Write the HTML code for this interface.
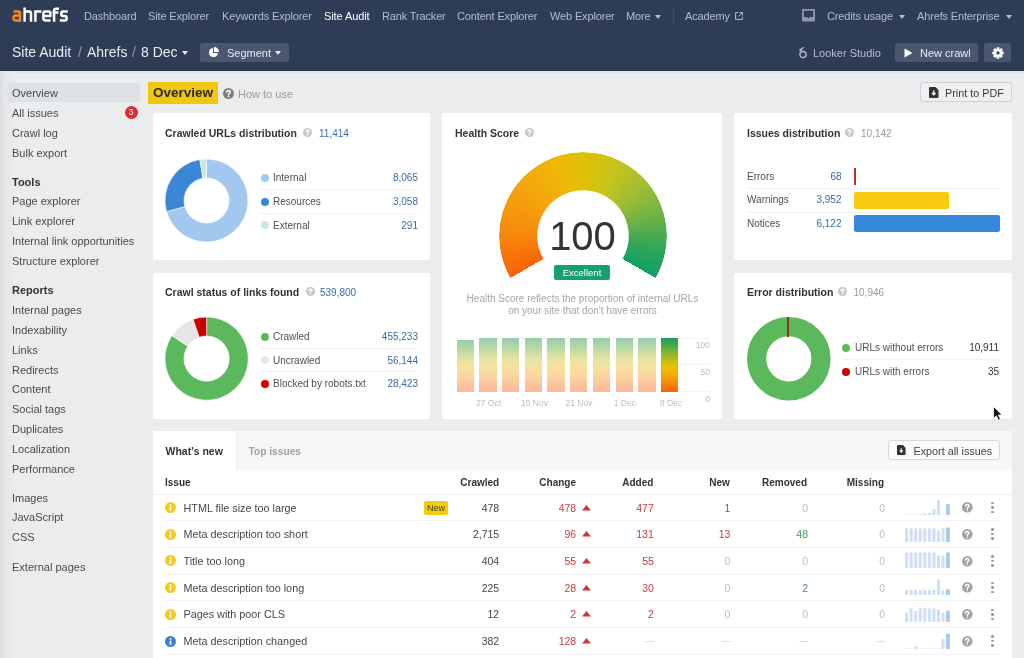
<!DOCTYPE html>
<html><head><meta charset="utf-8">
<style>
*{box-sizing:border-box;margin:0;padding:0}
html,body{width:1024px;height:658px;overflow:hidden}
#root{position:absolute;left:0;top:0;width:1024px;height:658px;will-change:transform}
body{font-family:"Liberation Sans",sans-serif;background:#eaecee;position:relative;color:#333}
.a{position:absolute;white-space:nowrap}
svg.a{overflow:visible}
</style></head><body>
<div id="root"><div class="a" style="left:0px;top:0px;width:1024px;height:71px;background:#2f3c56;"></div>
<div class="a" style="left:0px;top:69.5px;width:1024px;height:1.5px;background:#2a3447;"></div>
<div class="a" style="left:0px;top:71px;width:1024px;height:1.5px;background:#dfe3ea;"></div>
<svg class="a" style="left:12px;top:7px" width="57" height="16" viewBox="0 0 57 16"><g fill="none" stroke-width="2.5" stroke-linejoin="round">
<path d="M1.6 4.6H6.4Q8 4.6 8 6.2V14.8M8 8.6H3.4Q1.6 8.6 1.6 10.4V11.6Q1.6 13.4 3.4 13.4H8" stroke="#f5891f"/>
<path d="M12.6 0.4V14.8M12.6 4.6H17.2Q19 4.6 19 6.4V14.8" stroke="#fff"/>
<path d="M23.4 3.3V14.8M23.4 4.6H29.4" stroke="#fff"/>
<path d="M31.4 9H38.4V6.4Q38.4 4.6 36.6 4.6H33.2Q31.4 4.6 31.4 6.4V11.6Q31.4 13.4 33.2 13.4H38.6" stroke="#fff"/>
<path d="M42.1 14.8V3.6Q42.1 1.8 43.9 1.8H47M40.6 5.6H46.4" stroke="#fff"/>
<path d="M55.8 4.6H51Q49.3 4.6 49.3 6.3V7.3Q49.3 9 51 9H52.9Q54.6 9 54.6 10.7V11.7Q54.6 13.4 52.9 13.4H47.9" stroke="#fff"/>
</g></svg>
<div class="a" style="left:84px;top:11px;font-size:11px;line-height:11px;color:#b3bdd0;letter-spacing:-0.15px;">Dashboard</div>
<div class="a" style="left:148px;top:11px;font-size:11px;line-height:11px;color:#b3bdd0;letter-spacing:-0.15px;">Site Explorer</div>
<div class="a" style="left:222px;top:11px;font-size:11px;line-height:11px;color:#b3bdd0;letter-spacing:-0.15px;">Keywords Explorer</div>
<div class="a" style="left:382px;top:11px;font-size:11px;line-height:11px;color:#b3bdd0;letter-spacing:-0.15px;">Rank Tracker</div>
<div class="a" style="left:457px;top:11px;font-size:11px;line-height:11px;color:#b3bdd0;letter-spacing:-0.15px;">Content Explorer</div>
<div class="a" style="left:550px;top:11px;font-size:11px;line-height:11px;color:#b3bdd0;letter-spacing:-0.15px;">Web Explorer</div>
<div class="a" style="left:626px;top:11px;font-size:11px;line-height:11px;color:#b3bdd0;letter-spacing:-0.15px;">More</div>
<div class="a" style="left:685px;top:11px;font-size:11px;line-height:11px;color:#b3bdd0;letter-spacing:-0.15px;">Academy</div>
<div class="a" style="left:827px;top:11px;font-size:11px;line-height:11px;color:#b3bdd0;letter-spacing:-0.15px;">Credits usage</div>
<div class="a" style="left:917px;top:11px;font-size:11px;line-height:11px;color:#b3bdd0;letter-spacing:-0.15px;">Ahrefs Enterprise</div>
<div class="a" style="left:324px;top:11px;font-size:11px;line-height:11px;color:#ffffff;letter-spacing:-0.1px;">Site Audit</div>
<div class="a" style="left:655px;top:15px;width:0;height:0;border-left:3.0px solid transparent;border-right:3.0px solid transparent;border-top:4px solid #b3bdd0"></div>
<div class="a" style="left:899px;top:15px;width:0;height:0;border-left:3.0px solid transparent;border-right:3.0px solid transparent;border-top:4px solid #b3bdd0"></div>
<div class="a" style="left:1006px;top:15px;width:0;height:0;border-left:3.0px solid transparent;border-right:3.0px solid transparent;border-top:4px solid #b3bdd0"></div>
<div class="a" style="left:673px;top:8px;width:1px;height:17px;background:#404d64;"></div>
<svg class="a" style="left:735px;top:12px" width="8" height="8" viewBox="0 0 8 8"><path d="M3.2 0.6H0.6V7.4H7.4V4.8M4.6 0.6H7.4V3.4M7.4 0.6L3.6 4.4" fill="none" stroke="#b3bdd0" stroke-width="1"/></svg>
<svg class="a" style="left:802px;top:9px" width="14" height="13" viewBox="0 0 14 13"><rect x="0" y="0" width="13" height="12.5" rx="1" fill="#8d97a9"/><path d="M1.8 1.8H11.2V8H7.9L6.5 9.6L5.1 8H1.8Z" fill="#2f3c56"/></svg>
<div class="a" style="left:12px;top:45px;font-size:14px;line-height:14px;color:#e9ecf1;">Site Audit</div>
<div class="a" style="left:78px;top:45px;font-size:14px;line-height:14px;color:#8f99ab;">/</div>
<div class="a" style="left:87px;top:45px;font-size:14px;line-height:14px;color:#e9ecf1;">Ahrefs</div>
<div class="a" style="left:132px;top:45px;font-size:14px;line-height:14px;color:#8f99ab;">/</div>
<div class="a" style="left:141px;top:45px;font-size:14px;line-height:14px;color:#e9ecf1;">8 Dec</div>
<div class="a" style="left:182px;top:51px;width:0;height:0;border-left:3.0px solid transparent;border-right:3.0px solid transparent;border-top:4px solid #e9ecf1"></div>
<div class="a" style="left:200px;top:43px;width:89px;height:19px;background:#4b576d;border-radius:2.5px"></div>
<svg class="a" style="left:208.3px;top:47px" width="11" height="11" viewBox="0 0 11 11"><path d="M5 1A4.5 4.5 0 1 0 10 6H5Z" fill="#fff"/><path d="M6 0V5H11A5 5 0 0 0 6 0Z" fill="#fff"/></svg>
<div class="a" style="left:227px;top:48px;font-size:11px;line-height:11px;color:#e9ecf1;">Segment</div>
<div class="a" style="left:275px;top:51px;width:0;height:0;border-left:3.0px solid transparent;border-right:3.0px solid transparent;border-top:4px solid #e9ecf1"></div>
<svg class="a" style="left:799px;top:46px" width="9" height="13" viewBox="0 0 9 13"><circle cx="4" cy="8.6" r="3.1" fill="none" stroke="#b3bdd0" stroke-width="1.3"/><circle cx="1.6" cy="4" r="1.3" fill="#b3bdd0"/><path d="M1.6 4L4.3 1.6" stroke="#b3bdd0" stroke-width="1.3" stroke-linecap="round"/></svg>
<div class="a" style="left:813px;top:48px;font-size:11px;line-height:11px;color:#b3bdd0;">Looker Studio</div>
<div class="a" style="left:895px;top:43px;width:83px;height:19px;background:#4b576d;border-radius:2.5px"></div>
<svg class="a" style="left:904px;top:48px" width="9" height="10" viewBox="0 0 9 10"><path d="M0.5 0.5L8.5 5L0.5 9.5Z" fill="#fff"/></svg>
<div class="a" style="left:920px;top:48px;font-size:11px;line-height:11px;color:#e9ecf1;">New crawl</div>
<div class="a" style="left:984px;top:43px;width:27px;height:19px;background:#4b576d;border-radius:2.5px"></div>
<svg class="a" style="left:992.2px;top:47px" width="12" height="12" viewBox="0 0 14 14"><polygon points="13.64,5.52 13.64,8.48 11.59,8.73 11.46,9.02 12.74,10.64 10.64,12.74 9.02,11.46 8.73,11.59 8.48,13.64 5.52,13.64 5.27,11.59 4.98,11.46 3.36,12.74 1.26,10.64 2.54,9.02 2.41,8.73 0.36,8.48 0.36,5.52 2.41,5.27 2.54,4.98 1.26,3.36 3.36,1.26 4.98,2.54 5.27,2.41 5.52,0.36 8.48,0.36 8.73,2.41 9.02,2.54 10.64,1.26 12.74,3.36 11.46,4.98 11.59,5.27" fill="#fff"/><circle cx="7" cy="7" r="2.1" fill="#4a566d"/></svg>
<div class="a" style="left:0;top:72px;width:16px;height:586px;background:linear-gradient(90deg,#dbdde0,#e4e6e8 5px,#eaecee 16px)"></div>
<div class="a" style="left:7px;top:83px;width:133px;height:19px;background:#dfe2e5;border-radius:2px"></div>
<div class="a" style="left:12px;top:88px;font-size:11px;line-height:11px;color:#4a4a4a;">Overview</div>
<div class="a" style="left:12px;top:108px;font-size:11px;line-height:11px;color:#4a4a4a;">All issues</div>
<div class="a" style="left:12px;top:128px;font-size:11px;line-height:11px;color:#4a4a4a;">Crawl log</div>
<div class="a" style="left:12px;top:148px;font-size:11px;line-height:11px;color:#4a4a4a;">Bulk export</div>
<div class="a" style="left:12px;top:196px;font-size:11px;line-height:11px;color:#4a4a4a;">Page explorer</div>
<div class="a" style="left:12px;top:216px;font-size:11px;line-height:11px;color:#4a4a4a;">Link explorer</div>
<div class="a" style="left:12px;top:236px;font-size:11px;line-height:11px;color:#4a4a4a;">Internal link opportunities</div>
<div class="a" style="left:12px;top:256px;font-size:11px;line-height:11px;color:#4a4a4a;">Structure explorer</div>
<div class="a" style="left:12px;top:305px;font-size:11px;line-height:11px;color:#4a4a4a;">Internal pages</div>
<div class="a" style="left:12px;top:325px;font-size:11px;line-height:11px;color:#4a4a4a;">Indexability</div>
<div class="a" style="left:12px;top:345px;font-size:11px;line-height:11px;color:#4a4a4a;">Links</div>
<div class="a" style="left:12px;top:365px;font-size:11px;line-height:11px;color:#4a4a4a;">Redirects</div>
<div class="a" style="left:12px;top:384px;font-size:11px;line-height:11px;color:#4a4a4a;">Content</div>
<div class="a" style="left:12px;top:404px;font-size:11px;line-height:11px;color:#4a4a4a;">Social tags</div>
<div class="a" style="left:12px;top:424px;font-size:11px;line-height:11px;color:#4a4a4a;">Duplicates</div>
<div class="a" style="left:12px;top:444px;font-size:11px;line-height:11px;color:#4a4a4a;">Localization</div>
<div class="a" style="left:12px;top:464px;font-size:11px;line-height:11px;color:#4a4a4a;">Performance</div>
<div class="a" style="left:12px;top:493px;font-size:11px;line-height:11px;color:#4a4a4a;">Images</div>
<div class="a" style="left:12px;top:512px;font-size:11px;line-height:11px;color:#4a4a4a;">JavaScript</div>
<div class="a" style="left:12px;top:532px;font-size:11px;line-height:11px;color:#4a4a4a;">CSS</div>
<div class="a" style="left:12px;top:562px;font-size:11px;line-height:11px;color:#4a4a4a;">External pages</div>
<div class="a" style="left:12px;top:177px;font-size:11px;line-height:11px;font-weight:bold;color:#333;">Tools</div>
<div class="a" style="left:12px;top:285px;font-size:11px;line-height:11px;font-weight:bold;color:#333;">Reports</div>
<div class="a" style="left:124.5px;top:106px;width:13px;height:13px;border-radius:50%;background:#e02a2b;color:#fff;font-size:9px;line-height:13px;text-align:center">3</div>
<div class="a" style="left:148px;top:82px;width:70px;height:22px;background:#f0c70e;"></div>
<div class="a" style="left:153px;top:86px;font-size:13.5px;line-height:13.5px;font-weight:bold;color:#2b2a1c;">Overview</div>
<svg class="a" style="left:222.5px;top:88px" width="11" height="11" viewBox="0 0 10 10"><circle cx="5" cy="5" r="5" fill="#7f7f7f"/><path d="M3.4 3.9Q3.4 2.3 5 2.3Q6.6 2.3 6.6 3.7Q6.6 4.6 5.6 5.1Q5 5.4 5 6.2" fill="none" stroke="#fff" stroke-width="1.3" stroke-linecap="round"/><circle cx="5" cy="7.8" r="0.75" fill="#fff"/></svg>
<div class="a" style="left:238px;top:89px;font-size:11px;line-height:11px;color:#9a9a9a;">How to use</div>
<div class="a" style="left:920px;top:82px;width:92px;height:20px;background:#eef0f2;border:1px solid #cdd0d4;border-radius:3px"></div>
<svg class="a" style="left:929px;top:87px" width="10" height="11" viewBox="0 0 10 11"><path d="M0 1Q0 0 1 0H6.5L9.5 3V10Q9.5 11 8.5 11H1Q0 11 0 10Z" fill="#333"/><path d="M4.75 3.5V7.5M3 6L4.75 7.8L6.5 6" fill="none" stroke="#fff" stroke-width="1.3"/></svg>
<div class="a" style="left:945px;top:88px;font-size:10.8px;line-height:10.8px;color:#383838;">Print to PDF</div>
<div class="a" style="left:153px;top:113px;width:277px;height:147px;background:#fff;border-radius:2px"></div>
<div class="a" style="left:153px;top:273px;width:277px;height:146px;background:#fff;border-radius:2px"></div>
<div class="a" style="left:442px;top:113px;width:280px;height:306px;background:#fff;border-radius:2px"></div>
<div class="a" style="left:734px;top:113px;width:278px;height:147px;background:#fff;border-radius:2px"></div>
<div class="a" style="left:734px;top:273px;width:278px;height:146px;background:#fff;border-radius:2px"></div>
<div class="a" style="left:153px;top:431px;width:859px;height:227px;background:#fff;"></div>
<div class="a" style="left:165px;top:128px;font-size:10.5px;line-height:10.5px;font-weight:bold;color:#333;">Crawled URLs distribution</div>
<svg class="a" style="left:303px;top:128.2px" width="9" height="9" viewBox="0 0 10 10"><circle cx="5" cy="5" r="5" fill="#c8c8c8"/><path d="M3.4 3.9Q3.4 2.3 5 2.3Q6.6 2.3 6.6 3.7Q6.6 4.6 5.6 5.1Q5 5.4 5 6.2" fill="none" stroke="#fff" stroke-width="1.3" stroke-linecap="round"/><circle cx="5" cy="7.8" r="0.75" fill="#fff"/></svg>
<div class="a" style="left:319px;top:129px;font-size:10px;line-height:10px;color:#3b6aa6;">11,414</div>
<svg class="a" style="left:164.2px;top:157.6px" width="85.0" height="85.0" viewBox="-42.5 -42.5 85.0 85.0"><path d="M0.000 -41.500A41.5 41.5 0 1 1 -39.966 11.180L-21.668 6.061A22.5 22.5 0 1 0 0.000 -22.500Z" fill="#a3c8ef" stroke="#fff" stroke-width="0.6"/><path d="M-39.966 11.180A41.5 41.5 0 0 1 -6.619 -40.969L-3.589 -22.212A22.5 22.5 0 0 0 -21.668 6.061Z" fill="#3b87d6" stroke="#fff" stroke-width="0.6"/><path d="M-6.619 -40.969A41.5 41.5 0 0 1 -0.000 -41.500L-0.000 -22.500A22.5 22.5 0 0 0 -3.589 -22.212Z" fill="#c6e9d9" stroke="#fff" stroke-width="0.6"/></svg>
<div class="a" style="left:260.5px;top:173.8px;width:8px;height:8px;border-radius:50%;background:#a3c8ef"></div>
<div class="a" style="left:273px;top:173px;font-size:10px;line-height:10px;color:#505050;">Internal</div>
<div class="a" style="right:606px;text-align:right;top:173px;font-size:10px;line-height:10px;color:#3b6aa6;">8,065</div>
<div class="a" style="left:260.5px;top:197.5px;width:8px;height:8px;border-radius:50%;background:#3b87d6"></div>
<div class="a" style="left:273px;top:197px;font-size:10px;line-height:10px;color:#505050;">Resources</div>
<div class="a" style="right:606px;text-align:right;top:197px;font-size:10px;line-height:10px;color:#3b6aa6;">3,058</div>
<div class="a" style="left:260.5px;top:221.2px;width:8px;height:8px;border-radius:50%;background:#c6e9d9"></div>
<div class="a" style="left:273px;top:221px;font-size:10px;line-height:10px;color:#505050;">External</div>
<div class="a" style="right:606px;text-align:right;top:221px;font-size:10px;line-height:10px;color:#3b6aa6;">291</div>
<div class="a" style="left:260px;top:189px;width:157px;height:1px;background:#f0f0f0;"></div>
<div class="a" style="left:260px;top:212.5px;width:157px;height:1px;background:#f0f0f0;"></div>
<div class="a" style="left:165px;top:287px;font-size:10.5px;line-height:10.5px;font-weight:bold;color:#333;">Crawl status of links found</div>
<svg class="a" style="left:305.5px;top:287.2px" width="9" height="9" viewBox="0 0 10 10"><circle cx="5" cy="5" r="5" fill="#c8c8c8"/><path d="M3.4 3.9Q3.4 2.3 5 2.3Q6.6 2.3 6.6 3.7Q6.6 4.6 5.6 5.1Q5 5.4 5 6.2" fill="none" stroke="#fff" stroke-width="1.3" stroke-linecap="round"/><circle cx="5" cy="7.8" r="0.75" fill="#fff"/></svg>
<div class="a" style="left:320px;top:288px;font-size:10px;line-height:10px;color:#3b6aa6;">539,800</div>
<svg class="a" style="left:164.1px;top:316.2px" width="85.2" height="85.2" viewBox="-42.6 -42.6 85.2 85.2"><path d="M0.000 -41.600A41.6 41.6 0 1 1 -34.649 -23.022L-18.824 -12.507A22.6 22.6 0 1 0 0.000 -22.600Z" fill="#5cb85c" stroke="#fff" stroke-width="0.6"/><path d="M-34.649 -23.022A41.6 41.6 0 0 1 -13.513 -39.344L-7.341 -21.374A22.6 22.6 0 0 0 -18.824 -12.507Z" fill="#e6e6e6" stroke="#fff" stroke-width="0.6"/><path d="M-13.513 -39.344A41.6 41.6 0 0 1 0.000 -41.600L0.000 -22.600A22.6 22.6 0 0 0 -7.341 -21.374Z" fill="#cc0000" stroke="#fff" stroke-width="0.6"/></svg>
<div class="a" style="left:261px;top:332.5px;width:8px;height:8px;border-radius:50%;background:#5cb85c"></div>
<div class="a" style="left:273px;top:332px;font-size:10px;line-height:10px;color:#505050;">Crawled</div>
<div class="a" style="right:606px;text-align:right;top:332px;font-size:10px;line-height:10px;color:#3b6aa6;">455,233</div>
<div class="a" style="left:261px;top:356.1px;width:8px;height:8px;border-radius:50%;background:#e6e6e6"></div>
<div class="a" style="left:273px;top:356px;font-size:10px;line-height:10px;color:#505050;">Uncrawled</div>
<div class="a" style="right:606px;text-align:right;top:356px;font-size:10px;line-height:10px;color:#3b6aa6;">56,144</div>
<div class="a" style="left:261px;top:379.9px;width:8px;height:8px;border-radius:50%;background:#cc0000"></div>
<div class="a" style="left:273px;top:379px;font-size:10px;line-height:10px;color:#505050;">Blocked by robots.txt</div>
<div class="a" style="right:606px;text-align:right;top:379px;font-size:10px;line-height:10px;color:#3b6aa6;">28,423</div>
<div class="a" style="left:260px;top:347.5px;width:157px;height:1px;background:#f0f0f0;"></div>
<div class="a" style="left:260px;top:371px;width:157px;height:1px;background:#f0f0f0;"></div>
<div class="a" style="left:455px;top:128px;font-size:10.5px;line-height:10.5px;font-weight:bold;color:#333;">Health Score</div>
<svg class="a" style="left:524.5px;top:127.7px" width="9" height="9" viewBox="0 0 10 10"><circle cx="5" cy="5" r="5" fill="#c8c8c8"/><path d="M3.4 3.9Q3.4 2.3 5 2.3Q6.6 2.3 6.6 3.7Q6.6 4.6 5.6 5.1Q5 5.4 5 6.2" fill="none" stroke="#fff" stroke-width="1.3" stroke-linecap="round"/><circle cx="5" cy="7.8" r="0.75" fill="#fff"/></svg>
<div class="a" style="left:498.5px;top:152.3px;width:168px;height:168px;border-radius:50%;background:conic-gradient(from 240deg,#f8620a 0deg,#f68c0c 35deg,#f4a60c 70deg,#eeb806 100deg,#e0c004 120deg,#c8c41c 145deg,#a2be32 170deg,#6cb246 195deg,#30a658 220deg,#10a064 240deg,transparent 240deg);-webkit-mask:radial-gradient(circle at center,transparent 45.2px,#000 46.2px,#000 83.4px,transparent 84.4px)"></div>
<div class="a" style="left:382.5px;width:400px;text-align:center;top:216px;font-size:40px;line-height:40px;color:#333;">100</div>
<div class="a" style="left:554px;top:265px;width:56px;height:14.5px;background:#17a06e;border-radius:2px"></div>
<div class="a" style="left:382px;width:400px;text-align:center;top:268px;font-size:9.5px;line-height:9.5px;color:#fff;">Excellent</div>
<div class="a" style="left:382.5px;width:400px;text-align:center;top:294px;font-size:10px;line-height:10px;color:#a6a6a6;">Health Score reflects the proportion of internal URLs</div>
<div class="a" style="left:382.5px;width:400px;text-align:center;top:306px;font-size:10px;line-height:10px;color:#a6a6a6;">on your site that don't have errors</div>
<div class="a" style="left:455px;top:338px;width:255px;height:1px;background:#f4f4f4;"></div>
<div class="a" style="left:455px;top:364px;width:255px;height:1px;background:#f4f4f4;"></div>
<div class="a" style="left:455px;top:391px;width:255px;height:1px;background:#f4f4f4;"></div>
<div class="a" style="left:456.6px;top:340px;width:17.4px;height:52px;background:linear-gradient(180deg,#93cdac 0%,#b6d8a6 18%,#e4e2a0 38%,#f5e29e 52%,#fcd6a0 70%,#fcc29c 88%,#fbb99c 100%)"></div>
<div class="a" style="left:479.3px;top:338px;width:17.4px;height:54px;background:linear-gradient(180deg,#93cdac 0%,#b6d8a6 18%,#e4e2a0 38%,#f5e29e 52%,#fcd6a0 70%,#fcc29c 88%,#fbb99c 100%)"></div>
<div class="a" style="left:502px;top:338px;width:17.4px;height:54px;background:linear-gradient(180deg,#93cdac 0%,#b6d8a6 18%,#e4e2a0 38%,#f5e29e 52%,#fcd6a0 70%,#fcc29c 88%,#fbb99c 100%)"></div>
<div class="a" style="left:524.7px;top:338px;width:17.4px;height:54px;background:linear-gradient(180deg,#93cdac 0%,#b6d8a6 18%,#e4e2a0 38%,#f5e29e 52%,#fcd6a0 70%,#fcc29c 88%,#fbb99c 100%)"></div>
<div class="a" style="left:547.4px;top:338px;width:17.4px;height:54px;background:linear-gradient(180deg,#93cdac 0%,#b6d8a6 18%,#e4e2a0 38%,#f5e29e 52%,#fcd6a0 70%,#fcc29c 88%,#fbb99c 100%)"></div>
<div class="a" style="left:570.1px;top:338px;width:17.4px;height:54px;background:linear-gradient(180deg,#93cdac 0%,#b6d8a6 18%,#e4e2a0 38%,#f5e29e 52%,#fcd6a0 70%,#fcc29c 88%,#fbb99c 100%)"></div>
<div class="a" style="left:592.8px;top:338px;width:17.4px;height:54px;background:linear-gradient(180deg,#93cdac 0%,#b6d8a6 18%,#e4e2a0 38%,#f5e29e 52%,#fcd6a0 70%,#fcc29c 88%,#fbb99c 100%)"></div>
<div class="a" style="left:615.5px;top:338px;width:17.4px;height:54px;background:linear-gradient(180deg,#93cdac 0%,#b6d8a6 18%,#e4e2a0 38%,#f5e29e 52%,#fcd6a0 70%,#fcc29c 88%,#fbb99c 100%)"></div>
<div class="a" style="left:638.2px;top:338px;width:17.4px;height:54px;background:linear-gradient(180deg,#93cdac 0%,#b6d8a6 18%,#e4e2a0 38%,#f5e29e 52%,#fcd6a0 70%,#fcc29c 88%,#fbb99c 100%)"></div>
<div class="a" style="left:660.9px;top:338px;width:17.4px;height:54px;background:linear-gradient(180deg,#12a056 0%,#3aa84a 10%,#86b632 28%,#cfc00c 45%,#e8c002 55%,#f4ac06 68%,#f78a0a 82%,#f8620c 100%)"></div>
<div class="a" style="right:314px;text-align:right;top:341px;font-size:8.5px;line-height:8.5px;color:#bdbdbd;">100</div>
<div class="a" style="right:314px;text-align:right;top:368px;font-size:8.5px;line-height:8.5px;color:#bdbdbd;">50</div>
<div class="a" style="right:314px;text-align:right;top:395px;font-size:8.5px;line-height:8.5px;color:#bdbdbd;">0</div>
<div class="a" style="left:476px;top:399px;font-size:8.5px;line-height:8.5px;color:#bdbdbd;">27 Oct</div>
<div class="a" style="left:521px;top:399px;font-size:8.5px;line-height:8.5px;color:#bdbdbd;">10 Nov</div>
<div class="a" style="left:565.5px;top:399px;font-size:8.5px;line-height:8.5px;color:#bdbdbd;">21 Nov</div>
<div class="a" style="left:613.7px;top:399px;font-size:8.5px;line-height:8.5px;color:#bdbdbd;">1 Dec</div>
<div class="a" style="left:659.8px;top:399px;font-size:8.5px;line-height:8.5px;color:#bdbdbd;">8 Dec</div>
<div class="a" style="left:747px;top:128px;font-size:10.5px;line-height:10.5px;font-weight:bold;color:#333;">Issues distribution</div>
<svg class="a" style="left:844.5px;top:128.2px" width="9" height="9" viewBox="0 0 10 10"><circle cx="5" cy="5" r="5" fill="#c8c8c8"/><path d="M3.4 3.9Q3.4 2.3 5 2.3Q6.6 2.3 6.6 3.7Q6.6 4.6 5.6 5.1Q5 5.4 5 6.2" fill="none" stroke="#fff" stroke-width="1.3" stroke-linecap="round"/><circle cx="5" cy="7.8" r="0.75" fill="#fff"/></svg>
<div class="a" style="left:861px;top:129px;font-size:10px;line-height:10px;color:#999;">10,142</div>
<div class="a" style="left:747px;top:172px;font-size:10px;line-height:10px;color:#505050;">Errors</div>
<div class="a" style="right:182.5px;text-align:right;top:172px;font-size:10px;line-height:10px;color:#3b6aa6;">68</div>
<div class="a" style="left:747px;top:195px;font-size:10px;line-height:10px;color:#505050;">Warnings</div>
<div class="a" style="right:182.5px;text-align:right;top:195px;font-size:10px;line-height:10px;color:#3b6aa6;">3,952</div>
<div class="a" style="left:747px;top:219px;font-size:10px;line-height:10px;color:#505050;">Notices</div>
<div class="a" style="right:182.5px;text-align:right;top:219px;font-size:10px;line-height:10px;color:#3b6aa6;">6,122</div>
<div class="a" style="left:747px;top:188px;width:253px;height:1px;background:#f0f0f0;"></div>
<div class="a" style="left:747px;top:211.5px;width:253px;height:1px;background:#f0f0f0;"></div>
<div class="a" style="left:854.3px;top:168px;width:1.8px;height:17px;background:#c42a2a;"></div>
<div class="a" style="left:854px;top:191.5px;width:94.5px;height:17px;background:#f7cb12;border-radius:2px"></div>
<div class="a" style="left:854px;top:215px;width:145.5px;height:17px;background:#3588da;border-radius:2px"></div>
<div class="a" style="left:747px;top:287px;font-size:10.5px;line-height:10.5px;font-weight:bold;color:#333;">Error distribution</div>
<svg class="a" style="left:838px;top:287.2px" width="9" height="9" viewBox="0 0 10 10"><circle cx="5" cy="5" r="5" fill="#c8c8c8"/><path d="M3.4 3.9Q3.4 2.3 5 2.3Q6.6 2.3 6.6 3.7Q6.6 4.6 5.6 5.1Q5 5.4 5 6.2" fill="none" stroke="#fff" stroke-width="1.3" stroke-linecap="round"/><circle cx="5" cy="7.8" r="0.75" fill="#fff"/></svg>
<div class="a" style="left:853.5px;top:288px;font-size:10px;line-height:10px;color:#999;">10,946</div>
<svg class="a" style="left:746.0px;top:316.09999999999997px" width="85.6" height="85.6" viewBox="-42.8 -42.8 85.6 85.6"><circle r="32.2" fill="none" stroke="#5cb85c" stroke-width="19.199999999999996"/></svg>
<div class="a" style="left:787px;top:317px;width:2px;height:19.5px;background:#8e3414;"></div>
<div class="a" style="left:842px;top:343.6px;width:8px;height:8px;border-radius:50%;background:#5cb85c"></div>
<div class="a" style="left:855px;top:343px;font-size:10px;line-height:10px;color:#505050;">URLs without errors</div>
<div class="a" style="right:25px;text-align:right;top:343px;font-size:10px;line-height:10px;color:#333;">10,911</div>
<div class="a" style="left:842px;top:368px;width:8px;height:8px;border-radius:50%;background:#cc0000"></div>
<div class="a" style="left:855px;top:367px;font-size:10px;line-height:10px;color:#505050;">URLs with errors</div>
<div class="a" style="right:25px;text-align:right;top:367px;font-size:10px;line-height:10px;color:#333;">35</div>
<div class="a" style="left:844px;top:359px;width:156px;height:1px;background:#f0f0f0;"></div>
<svg class="a" style="left:993px;top:406px" width="10" height="15" viewBox="0 0 10 15"><path d="M0.5 0.5V12.5L3.3 9.8L5.5 14.2L7.5 13.3L5.4 9H9.2Z" fill="#111" stroke="#fff" stroke-width="0.8"/></svg>
<div class="a" style="left:236px;top:431px;width:776px;height:39px;background:#f7f7f8;border-left:1px solid #ededed"></div>
<div class="a" style="left:165.5px;top:446px;font-size:10.5px;line-height:10.5px;font-weight:bold;color:#333;">What's new</div>
<div class="a" style="left:248.5px;top:447px;font-size:10.2px;line-height:10.2px;font-weight:bold;color:#a2a2a2;">Top issues</div>
<div class="a" style="left:888px;top:440px;width:111.5px;height:19.8px;background:#fbfbfb;border:1px solid #d8d9dc;border-radius:3px"></div>
<svg class="a" style="left:897px;top:444.5px" width="9" height="10" viewBox="0 0 10 11"><path d="M0 1Q0 0 1 0H6.5L9.5 3V10Q9.5 11 8.5 11H1Q0 11 0 10Z" fill="#333"/><path d="M4.75 3.5V7.5M3 6L4.75 7.8L6.5 6" fill="none" stroke="#fff" stroke-width="1.3"/></svg>
<div class="a" style="left:913.5px;top:446px;font-size:10.8px;line-height:10.8px;color:#444;">Export all issues</div>
<div class="a" style="left:165px;top:478px;font-size:10px;line-height:10px;font-weight:bold;color:#333;">Issue</div>
<div class="a" style="right:524.8px;text-align:right;top:478px;font-size:10px;line-height:10px;font-weight:bold;color:#333;">Crawled</div>
<div class="a" style="right:448px;text-align:right;top:478px;font-size:10px;line-height:10px;font-weight:bold;color:#333;">Change</div>
<div class="a" style="right:370.70000000000005px;text-align:right;top:478px;font-size:10px;line-height:10px;font-weight:bold;color:#333;">Added</div>
<div class="a" style="right:294.20000000000005px;text-align:right;top:478px;font-size:10px;line-height:10px;font-weight:bold;color:#333;">New</div>
<div class="a" style="right:217px;text-align:right;top:478px;font-size:10px;line-height:10px;font-weight:bold;color:#333;">Removed</div>
<div class="a" style="right:140px;text-align:right;top:478px;font-size:10px;line-height:10px;font-weight:bold;color:#333;">Missing</div>
<div class="a" style="left:153px;top:494px;width:859px;height:1px;background:#eeeeee;"></div>
<svg class="a" style="left:164.5px;top:502.0px" width="11" height="11" viewBox="0 0 11 11"><circle cx="5.5" cy="5.5" r="5.5" fill="#f2cb1d"/><rect x="4.7" y="2.2" width="1.6" height="1.6" fill="#fff"/><rect x="4.7" y="4.6" width="1.6" height="4.2" fill="#fff"/></svg>
<div class="a" style="left:183.5px;top:503px;font-size:10.8px;line-height:10.8px;color:#474747;">HTML file size too large</div>
<div class="a" style="left:424px;top:500.5px;width:24px;height:14px;background:#f5cd0f;border-radius:2px"></div>
<div class="a" style="left:236px;width:400px;text-align:center;top:504px;font-size:9px;line-height:9px;color:#4a3f00;">New</div>
<div class="a" style="right:524.8px;text-align:right;top:503px;font-size:10.5px;line-height:10.5px;color:#474747;">478</div>
<div class="a" style="right:447.79999999999995px;text-align:right;top:503px;font-size:10.5px;line-height:10.5px;color:#c83a3c;">478</div>
<svg class="a" style="left:581.5px;top:504.5px" width="9" height="5.5" viewBox="0 0 9 5.5"><path d="M4.5 0L9 5.5H0Z" fill="#c83a3c"/></svg>
<div class="a" style="right:370.20000000000005px;text-align:right;top:503px;font-size:10.5px;line-height:10.5px;color:#c83a3c;">477</div>
<div class="a" style="right:293.6px;text-align:right;top:503px;font-size:10.5px;line-height:10.5px;color:#c83a3c;">1</div>
<div class="a" style="right:216px;text-align:right;top:503px;font-size:10.5px;line-height:10.5px;color:#bdbdbd;">0</div>
<div class="a" style="right:139px;text-align:right;top:503px;font-size:10.5px;line-height:10.5px;color:#bdbdbd;">0</div>
<svg class="a" style="left:904.9px;top:499.0px" width="46" height="16" viewBox="0 0 46 16"><rect x="0.00" y="15.5" width="3.1" height="0.5" fill="#cfe0f4"/><rect x="4.56" y="15.5" width="3.1" height="0.5" fill="#cfe0f4"/><rect x="9.12" y="15.5" width="3.1" height="0.5" fill="#cfe0f4"/><rect x="13.68" y="15.5" width="3.1" height="0.5" fill="#cfe0f4"/><rect x="18.24" y="14.5" width="3.1" height="1.5" fill="#cfe0f4"/><rect x="22.80" y="14" width="3.1" height="2" fill="#cfe0f4"/><rect x="27.36" y="10" width="3.1" height="6" fill="#cfe0f4"/><rect x="31.92" y="1" width="3.1" height="15" fill="#cfe0f4"/><rect x="36.48" y="15.7" width="3.1" height="0.3" fill="#cfe0f4"/><rect x="41.04" y="5" width="3.8" height="11" fill="#a9c9ec"/></svg>
<svg class="a" style="left:961.7px;top:502.2px" width="10.6" height="10.6" viewBox="0 0 10 10"><circle cx="5" cy="5" r="5" fill="#a2a2a2"/><path d="M3.4 3.9Q3.4 2.3 5 2.3Q6.6 2.3 6.6 3.7Q6.6 4.6 5.6 5.1Q5 5.4 5 6.2" fill="none" stroke="#fff" stroke-width="1.3" stroke-linecap="round"/><circle cx="5" cy="7.8" r="0.75" fill="#fff"/></svg>
<div class="a" style="left:991.4px;top:501.7px;width:2.6px;height:2.6px;border-radius:50%;background:#9a9a9a"></div>
<div class="a" style="left:991.4px;top:506.2px;width:2.6px;height:2.6px;border-radius:50%;background:#9a9a9a"></div>
<div class="a" style="left:991.4px;top:510.7px;width:2.6px;height:2.6px;border-radius:50%;background:#9a9a9a"></div>
<div class="a" style="left:165px;top:520px;width:835px;height:1px;background:#f2f2f2;"></div>
<svg class="a" style="left:164.5px;top:528.7px" width="11" height="11" viewBox="0 0 11 11"><circle cx="5.5" cy="5.5" r="5.5" fill="#f2cb1d"/><rect x="4.7" y="2.2" width="1.6" height="1.6" fill="#fff"/><rect x="4.7" y="4.6" width="1.6" height="4.2" fill="#fff"/></svg>
<div class="a" style="left:183.5px;top:529px;font-size:10.8px;line-height:10.8px;color:#474747;">Meta description too short</div>
<div class="a" style="right:524.8px;text-align:right;top:529px;font-size:10.5px;line-height:10.5px;color:#474747;">2,715</div>
<div class="a" style="right:447.79999999999995px;text-align:right;top:529px;font-size:10.5px;line-height:10.5px;color:#c83a3c;">96</div>
<svg class="a" style="left:581.5px;top:531.2px" width="9" height="5.5" viewBox="0 0 9 5.5"><path d="M4.5 0L9 5.5H0Z" fill="#c83a3c"/></svg>
<div class="a" style="right:370.20000000000005px;text-align:right;top:529px;font-size:10.5px;line-height:10.5px;color:#c83a3c;">131</div>
<div class="a" style="right:293.6px;text-align:right;top:529px;font-size:10.5px;line-height:10.5px;color:#c83a3c;">13</div>
<div class="a" style="right:216px;text-align:right;top:529px;font-size:10.5px;line-height:10.5px;color:#3a9a5e;">48</div>
<div class="a" style="right:139px;text-align:right;top:529px;font-size:10.5px;line-height:10.5px;color:#bdbdbd;">0</div>
<svg class="a" style="left:904.9px;top:525.7px" width="46" height="16" viewBox="0 0 46 16"><rect x="0.00" y="2.3000000000000007" width="3.1" height="13.7" fill="#cfe0f4"/><rect x="4.56" y="2.3000000000000007" width="3.1" height="13.7" fill="#cfe0f4"/><rect x="9.12" y="2.3000000000000007" width="3.1" height="13.7" fill="#cfe0f4"/><rect x="13.68" y="2.3000000000000007" width="3.1" height="13.7" fill="#cfe0f4"/><rect x="18.24" y="2.3000000000000007" width="3.1" height="13.7" fill="#cfe0f4"/><rect x="22.80" y="2.3000000000000007" width="3.1" height="13.7" fill="#cfe0f4"/><rect x="27.36" y="2.3000000000000007" width="3.1" height="13.7" fill="#cfe0f4"/><rect x="31.92" y="4.6" width="3.1" height="11.4" fill="#cfe0f4"/><rect x="36.48" y="2.3000000000000007" width="3.1" height="13.7" fill="#cfe0f4"/><rect x="41.04" y="1.5999999999999996" width="3.8" height="14.4" fill="#a9c9ec"/></svg>
<svg class="a" style="left:961.7px;top:528.9000000000001px" width="10.6" height="10.6" viewBox="0 0 10 10"><circle cx="5" cy="5" r="5" fill="#a2a2a2"/><path d="M3.4 3.9Q3.4 2.3 5 2.3Q6.6 2.3 6.6 3.7Q6.6 4.6 5.6 5.1Q5 5.4 5 6.2" fill="none" stroke="#fff" stroke-width="1.3" stroke-linecap="round"/><circle cx="5" cy="7.8" r="0.75" fill="#fff"/></svg>
<div class="a" style="left:991.4px;top:528.4px;width:2.6px;height:2.6px;border-radius:50%;background:#9a9a9a"></div>
<div class="a" style="left:991.4px;top:532.9px;width:2.6px;height:2.6px;border-radius:50%;background:#9a9a9a"></div>
<div class="a" style="left:991.4px;top:537.4px;width:2.6px;height:2.6px;border-radius:50%;background:#9a9a9a"></div>
<div class="a" style="left:165px;top:547px;width:835px;height:1px;background:#f2f2f2;"></div>
<svg class="a" style="left:164.5px;top:555.4px" width="11" height="11" viewBox="0 0 11 11"><circle cx="5.5" cy="5.5" r="5.5" fill="#f2cb1d"/><rect x="4.7" y="2.2" width="1.6" height="1.6" fill="#fff"/><rect x="4.7" y="4.6" width="1.6" height="4.2" fill="#fff"/></svg>
<div class="a" style="left:183.5px;top:556px;font-size:10.8px;line-height:10.8px;color:#474747;">Title too long</div>
<div class="a" style="right:524.8px;text-align:right;top:556px;font-size:10.5px;line-height:10.5px;color:#474747;">404</div>
<div class="a" style="right:447.79999999999995px;text-align:right;top:556px;font-size:10.5px;line-height:10.5px;color:#c83a3c;">55</div>
<svg class="a" style="left:581.5px;top:557.9px" width="9" height="5.5" viewBox="0 0 9 5.5"><path d="M4.5 0L9 5.5H0Z" fill="#c83a3c"/></svg>
<div class="a" style="right:370.20000000000005px;text-align:right;top:556px;font-size:10.5px;line-height:10.5px;color:#c83a3c;">55</div>
<div class="a" style="right:293.6px;text-align:right;top:556px;font-size:10.5px;line-height:10.5px;color:#bdbdbd;">0</div>
<div class="a" style="right:216px;text-align:right;top:556px;font-size:10.5px;line-height:10.5px;color:#bdbdbd;">0</div>
<div class="a" style="right:139px;text-align:right;top:556px;font-size:10.5px;line-height:10.5px;color:#bdbdbd;">0</div>
<svg class="a" style="left:904.9px;top:552.4px" width="46" height="16" viewBox="0 0 46 16"><rect x="0.00" y="0.5" width="3.1" height="15.5" fill="#cfe0f4"/><rect x="4.56" y="0.5" width="3.1" height="15.5" fill="#cfe0f4"/><rect x="9.12" y="0.5" width="3.1" height="15.5" fill="#cfe0f4"/><rect x="13.68" y="0.5" width="3.1" height="15.5" fill="#cfe0f4"/><rect x="18.24" y="0.5" width="3.1" height="15.5" fill="#cfe0f4"/><rect x="22.80" y="0.5" width="3.1" height="15.5" fill="#cfe0f4"/><rect x="27.36" y="0.5" width="3.1" height="15.5" fill="#cfe0f4"/><rect x="31.92" y="3" width="3.1" height="13" fill="#cfe0f4"/><rect x="36.48" y="3.5" width="3.1" height="12.5" fill="#cfe0f4"/><rect x="41.04" y="0.5" width="3.8" height="15.5" fill="#a9c9ec"/></svg>
<svg class="a" style="left:961.7px;top:555.6px" width="10.6" height="10.6" viewBox="0 0 10 10"><circle cx="5" cy="5" r="5" fill="#a2a2a2"/><path d="M3.4 3.9Q3.4 2.3 5 2.3Q6.6 2.3 6.6 3.7Q6.6 4.6 5.6 5.1Q5 5.4 5 6.2" fill="none" stroke="#fff" stroke-width="1.3" stroke-linecap="round"/><circle cx="5" cy="7.8" r="0.75" fill="#fff"/></svg>
<div class="a" style="left:991.4px;top:555.1px;width:2.6px;height:2.6px;border-radius:50%;background:#9a9a9a"></div>
<div class="a" style="left:991.4px;top:559.6px;width:2.6px;height:2.6px;border-radius:50%;background:#9a9a9a"></div>
<div class="a" style="left:991.4px;top:564.1px;width:2.6px;height:2.6px;border-radius:50%;background:#9a9a9a"></div>
<div class="a" style="left:165px;top:574px;width:835px;height:1px;background:#f2f2f2;"></div>
<svg class="a" style="left:164.5px;top:582.1px" width="11" height="11" viewBox="0 0 11 11"><circle cx="5.5" cy="5.5" r="5.5" fill="#f2cb1d"/><rect x="4.7" y="2.2" width="1.6" height="1.6" fill="#fff"/><rect x="4.7" y="4.6" width="1.6" height="4.2" fill="#fff"/></svg>
<div class="a" style="left:183.5px;top:583px;font-size:10.8px;line-height:10.8px;color:#474747;">Meta description too long</div>
<div class="a" style="right:524.8px;text-align:right;top:583px;font-size:10.5px;line-height:10.5px;color:#474747;">225</div>
<div class="a" style="right:447.79999999999995px;text-align:right;top:583px;font-size:10.5px;line-height:10.5px;color:#c83a3c;">28</div>
<svg class="a" style="left:581.5px;top:584.6px" width="9" height="5.5" viewBox="0 0 9 5.5"><path d="M4.5 0L9 5.5H0Z" fill="#c83a3c"/></svg>
<div class="a" style="right:370.20000000000005px;text-align:right;top:583px;font-size:10.5px;line-height:10.5px;color:#c83a3c;">30</div>
<div class="a" style="right:293.6px;text-align:right;top:583px;font-size:10.5px;line-height:10.5px;color:#bdbdbd;">0</div>
<div class="a" style="right:216px;text-align:right;top:583px;font-size:10.5px;line-height:10.5px;color:#3a9a5e;">2</div>
<div class="a" style="right:139px;text-align:right;top:583px;font-size:10.5px;line-height:10.5px;color:#bdbdbd;">0</div>
<svg class="a" style="left:904.9px;top:579.1px" width="46" height="16" viewBox="0 0 46 16"><rect x="0.00" y="10.7" width="3.1" height="5.3" fill="#cfe0f4"/><rect x="4.56" y="10.7" width="3.1" height="5.3" fill="#cfe0f4"/><rect x="9.12" y="10.7" width="3.1" height="5.3" fill="#cfe0f4"/><rect x="13.68" y="10.7" width="3.1" height="5.3" fill="#cfe0f4"/><rect x="18.24" y="10.7" width="3.1" height="5.3" fill="#cfe0f4"/><rect x="22.80" y="10.7" width="3.1" height="5.3" fill="#cfe0f4"/><rect x="27.36" y="10.7" width="3.1" height="5.3" fill="#cfe0f4"/><rect x="31.92" y="0.5" width="3.1" height="15.5" fill="#cfe0f4"/><rect x="36.48" y="11.5" width="3.1" height="4.5" fill="#cfe0f4"/><rect x="41.04" y="10.3" width="3.8" height="5.7" fill="#a9c9ec"/></svg>
<svg class="a" style="left:961.7px;top:582.3000000000001px" width="10.6" height="10.6" viewBox="0 0 10 10"><circle cx="5" cy="5" r="5" fill="#a2a2a2"/><path d="M3.4 3.9Q3.4 2.3 5 2.3Q6.6 2.3 6.6 3.7Q6.6 4.6 5.6 5.1Q5 5.4 5 6.2" fill="none" stroke="#fff" stroke-width="1.3" stroke-linecap="round"/><circle cx="5" cy="7.8" r="0.75" fill="#fff"/></svg>
<div class="a" style="left:991.4px;top:581.8px;width:2.6px;height:2.6px;border-radius:50%;background:#9a9a9a"></div>
<div class="a" style="left:991.4px;top:586.3px;width:2.6px;height:2.6px;border-radius:50%;background:#9a9a9a"></div>
<div class="a" style="left:991.4px;top:590.8px;width:2.6px;height:2.6px;border-radius:50%;background:#9a9a9a"></div>
<div class="a" style="left:165px;top:600px;width:835px;height:1px;background:#f2f2f2;"></div>
<svg class="a" style="left:164.5px;top:608.8px" width="11" height="11" viewBox="0 0 11 11"><circle cx="5.5" cy="5.5" r="5.5" fill="#f2cb1d"/><rect x="4.7" y="2.2" width="1.6" height="1.6" fill="#fff"/><rect x="4.7" y="4.6" width="1.6" height="4.2" fill="#fff"/></svg>
<div class="a" style="left:183.5px;top:609px;font-size:10.8px;line-height:10.8px;color:#474747;">Pages with poor CLS</div>
<div class="a" style="right:524.8px;text-align:right;top:609px;font-size:10.5px;line-height:10.5px;color:#474747;">12</div>
<div class="a" style="right:447.79999999999995px;text-align:right;top:609px;font-size:10.5px;line-height:10.5px;color:#c83a3c;">2</div>
<svg class="a" style="left:581.5px;top:611.3px" width="9" height="5.5" viewBox="0 0 9 5.5"><path d="M4.5 0L9 5.5H0Z" fill="#c83a3c"/></svg>
<div class="a" style="right:370.20000000000005px;text-align:right;top:609px;font-size:10.5px;line-height:10.5px;color:#c83a3c;">2</div>
<div class="a" style="right:293.6px;text-align:right;top:609px;font-size:10.5px;line-height:10.5px;color:#bdbdbd;">0</div>
<div class="a" style="right:216px;text-align:right;top:609px;font-size:10.5px;line-height:10.5px;color:#bdbdbd;">0</div>
<div class="a" style="right:139px;text-align:right;top:609px;font-size:10.5px;line-height:10.5px;color:#bdbdbd;">0</div>
<svg class="a" style="left:904.9px;top:605.8px" width="46" height="16" viewBox="0 0 46 16"><rect x="0.00" y="6.5" width="3.1" height="9.5" fill="#cfe0f4"/><rect x="4.56" y="2.3000000000000007" width="3.1" height="13.7" fill="#cfe0f4"/><rect x="9.12" y="5" width="3.1" height="11" fill="#cfe0f4"/><rect x="13.68" y="2.3000000000000007" width="3.1" height="13.7" fill="#cfe0f4"/><rect x="18.24" y="1.5999999999999996" width="3.1" height="14.4" fill="#cfe0f4"/><rect x="22.80" y="2.3000000000000007" width="3.1" height="13.7" fill="#cfe0f4"/><rect x="27.36" y="2.3000000000000007" width="3.1" height="13.7" fill="#cfe0f4"/><rect x="31.92" y="3.5" width="3.1" height="12.5" fill="#cfe0f4"/><rect x="36.48" y="6.5" width="3.1" height="9.5" fill="#cfe0f4"/><rect x="41.04" y="4.6" width="3.8" height="11.4" fill="#a9c9ec"/></svg>
<svg class="a" style="left:961.7px;top:609.0px" width="10.6" height="10.6" viewBox="0 0 10 10"><circle cx="5" cy="5" r="5" fill="#a2a2a2"/><path d="M3.4 3.9Q3.4 2.3 5 2.3Q6.6 2.3 6.6 3.7Q6.6 4.6 5.6 5.1Q5 5.4 5 6.2" fill="none" stroke="#fff" stroke-width="1.3" stroke-linecap="round"/><circle cx="5" cy="7.8" r="0.75" fill="#fff"/></svg>
<div class="a" style="left:991.4px;top:608.5px;width:2.6px;height:2.6px;border-radius:50%;background:#9a9a9a"></div>
<div class="a" style="left:991.4px;top:613.0px;width:2.6px;height:2.6px;border-radius:50%;background:#9a9a9a"></div>
<div class="a" style="left:991.4px;top:617.5px;width:2.6px;height:2.6px;border-radius:50%;background:#9a9a9a"></div>
<div class="a" style="left:165px;top:627px;width:835px;height:1px;background:#f2f2f2;"></div>
<svg class="a" style="left:164.5px;top:635.5px" width="11" height="11" viewBox="0 0 11 11"><circle cx="5.5" cy="5.5" r="5.5" fill="#3d7fd0"/><rect x="4.7" y="2.2" width="1.6" height="1.6" fill="#fff"/><rect x="4.7" y="4.6" width="1.6" height="4.2" fill="#fff"/></svg>
<div class="a" style="left:183.5px;top:636px;font-size:10.8px;line-height:10.8px;color:#474747;">Meta description changed</div>
<div class="a" style="right:524.8px;text-align:right;top:636px;font-size:10.5px;line-height:10.5px;color:#474747;">382</div>
<div class="a" style="right:447.79999999999995px;text-align:right;top:636px;font-size:10.5px;line-height:10.5px;color:#c83a3c;">128</div>
<svg class="a" style="left:581.5px;top:638.0px" width="9" height="5.5" viewBox="0 0 9 5.5"><path d="M4.5 0L9 5.5H0Z" fill="#c83a3c"/></svg>
<div class="a" style="right:370.20000000000005px;text-align:right;top:637px;font-size:8.5px;line-height:8.5px;color:#cccccc;">—</div>
<div class="a" style="right:293.6px;text-align:right;top:637px;font-size:8.5px;line-height:8.5px;color:#cccccc;">—</div>
<div class="a" style="right:216px;text-align:right;top:637px;font-size:8.5px;line-height:8.5px;color:#cccccc;">—</div>
<div class="a" style="right:139px;text-align:right;top:637px;font-size:8.5px;line-height:8.5px;color:#cccccc;">—</div>
<svg class="a" style="left:904.9px;top:632.5px" width="46" height="16" viewBox="0 0 46 16"><rect x="0.00" y="15.5" width="3.1" height="0.5" fill="#cfe0f4"/><rect x="4.56" y="15.5" width="3.1" height="0.5" fill="#cfe0f4"/><rect x="9.12" y="13.3" width="3.1" height="2.7" fill="#cfe0f4"/><rect x="13.68" y="15.5" width="3.1" height="0.5" fill="#cfe0f4"/><rect x="18.24" y="15.5" width="3.1" height="0.5" fill="#cfe0f4"/><rect x="22.80" y="15.5" width="3.1" height="0.5" fill="#cfe0f4"/><rect x="27.36" y="15.5" width="3.1" height="0.5" fill="#cfe0f4"/><rect x="31.92" y="15.5" width="3.1" height="0.5" fill="#cfe0f4"/><rect x="36.48" y="6" width="3.1" height="10" fill="#cfe0f4"/><rect x="41.04" y="0.8000000000000007" width="3.8" height="15.2" fill="#a9c9ec"/></svg>
<svg class="a" style="left:961.7px;top:635.7px" width="10.6" height="10.6" viewBox="0 0 10 10"><circle cx="5" cy="5" r="5" fill="#a2a2a2"/><path d="M3.4 3.9Q3.4 2.3 5 2.3Q6.6 2.3 6.6 3.7Q6.6 4.6 5.6 5.1Q5 5.4 5 6.2" fill="none" stroke="#fff" stroke-width="1.3" stroke-linecap="round"/><circle cx="5" cy="7.8" r="0.75" fill="#fff"/></svg>
<div class="a" style="left:991.4px;top:635.2px;width:2.6px;height:2.6px;border-radius:50%;background:#9a9a9a"></div>
<div class="a" style="left:991.4px;top:639.7px;width:2.6px;height:2.6px;border-radius:50%;background:#9a9a9a"></div>
<div class="a" style="left:991.4px;top:644.2px;width:2.6px;height:2.6px;border-radius:50%;background:#9a9a9a"></div>
<div class="a" style="left:165px;top:654px;width:835px;height:1px;background:#f2f2f2;"></div></div>
</body></html>
